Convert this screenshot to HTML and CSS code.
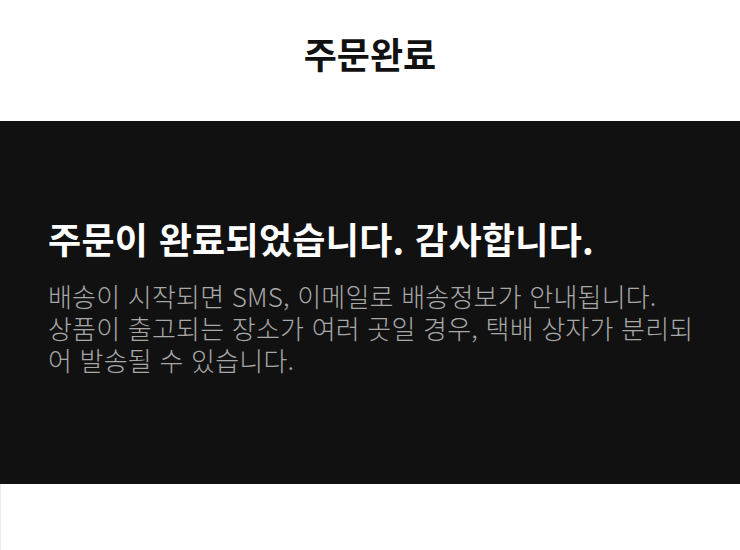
FILE: index.html
```html
<!DOCTYPE html>
<html lang="ko">
<head>
<meta charset="utf-8">
<title>주문완료</title>
<link rel="stylesheet" href="styles.css">
</head>
<body>
<header class="top">
  <h1 class="top-title">주문완료</h1>
</header>
<section class="done">
  <h2 class="done-title">주문이 완료되었습니다. 감사합니다.</h2>
  <p class="done-text">배송이 시작되면 SMS, 이메일로 배송정보가 안내됩니다.<br>상품이 출고되는 장소가 여러 곳일 경우, 택배 상자가 분리되어 발송될 수 있습니다.</p>
</section>
<div class="rest"></div>
</body>
</html>
```
FILE: styles.css
```css
* { box-sizing: border-box; }
html, body { margin: 0; padding: 0; background: #fff; }
body {
  font-family: "Noto Sans CJK KR", "Noto Sans", sans-serif;
  width: 740px;
  height: 550px;
  overflow: hidden;
}
.top {
  height: 121px;
  padding-top: 26px;
  text-align: center;
}
.top-title {
  margin: 0;
  font-size: 36px;
  font-weight: 700;
  color: #111;
  line-height: 54px;
}
.done {
  background: #111111;
  height: 363px;
  padding: 93px 40px 0 48px;
}
.done-title {
  margin: 0;
  color: #fff;
  font-size: 36px;
  font-weight: 700;
  line-height: 48px;
  letter-spacing: 0.3px;
}
.done-text {
  margin: 18px 0 0;
  color: #a8a8a8;
  font-size: 26px;
  font-weight: 300;
  line-height: 32px;
  letter-spacing: 0.2px;
}
.rest {
  height: 66px;
  border-left: 1px solid #ececec;
}
```
